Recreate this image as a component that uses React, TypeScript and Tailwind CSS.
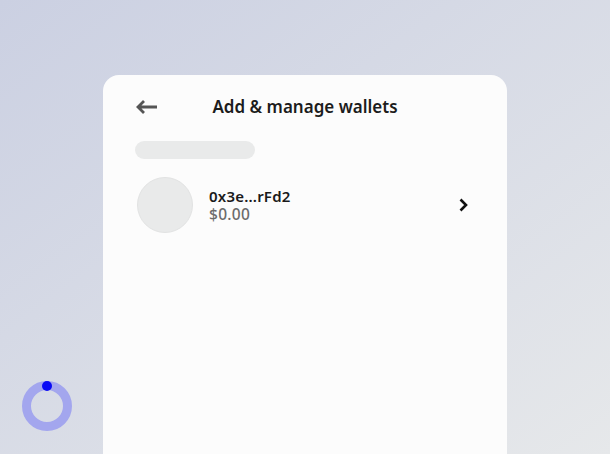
import React from "react";

export default function App() {
  return (
    <div
      className="relative w-[610px] h-[454px] overflow-hidden bg-gradient-to-br from-[#cbd0e2] to-[#e6e8ea]"
      style={{ fontFamily: '"Noto Sans", "Open Sans", sans-serif' }}
    >
      <div className="pt-[75px] flex justify-center">
        <div className="w-[404px] h-[400px] rounded-t-[16px] bg-[#fcfcfc] px-[32px] pt-[20px]">
          <div className="relative flex items-center h-[24px]">
            <svg width="24" height="16" viewBox="0 0 24 16" className="text-[#555555]">
              <path d="M22 8H3M9 2L3 8l6 6" fill="none" stroke="currentColor" strokeWidth="2.8" strokeLinecap="butt" strokeLinejoin="miter" />
            </svg>
            <div className="absolute inset-x-0 text-center text-[17px] font-semibold text-[#1c1c1c] leading-[24px]">
              Add &amp; manage wallets
            </div>
          </div>
          <div className="mt-[22px] w-[120px] h-[18px] rounded-full bg-[#e9eaea]" />
          <div className="mt-[18px] flex items-center">
            <div className="w-[56px] h-[56px] rounded-full bg-[#e9eaea] border border-[#e2e3e3] ml-[2px]" />
            <div className="ml-[16px] flex flex-col">
              <span className="text-[15px] leading-[17px] font-semibold text-[#1a1a1a] tracking-[0.2px]">0x3e...rFd2</span>
              <span className="text-[15.5px] leading-[18px] font-medium text-[#6b6b6b] tracking-[0.3px]">$0.00</span>
            </div>
            <div className="ml-auto mr-[7px]">
              <svg width="10" height="14" viewBox="0 0 10 14">
                <path d="M2.5 1.5L8 7l-5.5 5.5" fill="none" stroke="#111" strokeWidth="2.6" />
              </svg>
            </div>
          </div>
        </div>
      </div>
      <div className="absolute left-[22px] top-[381px] w-[50px] h-[50px]">
        <svg width="50" height="50" viewBox="0 0 50 50">
          <circle cx="25" cy="25" r="20.5" fill="none" stroke="#a3a6ee" strokeWidth="9" />
          <circle cx="25" cy="5" r="5" fill="#0a0af5" />
        </svg>
      </div>
    </div>
  );
}
